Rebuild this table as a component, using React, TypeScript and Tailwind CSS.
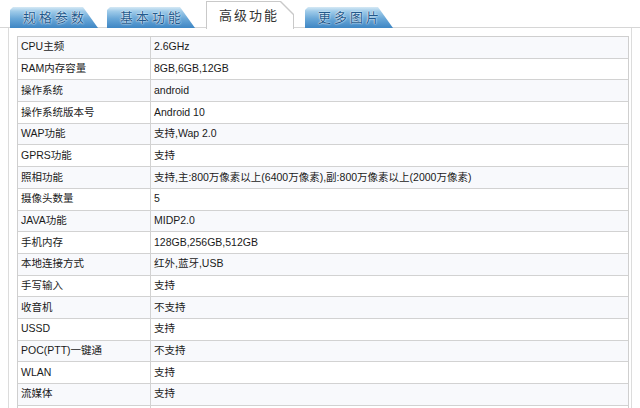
import React from "react";

const rows: [string, string][] = [
  ["CPU主频", "2.6GHz"],
  ["RAM内存容量", "8GB,6GB,12GB"],
  ["操作系统", "android"],
  ["操作系统版本号", "Android 10"],
  ["WAP功能", "支持,Wap 2.0"],
  ["GPRS功能", "支持"],
  ["照相功能", "支持,主:800万像素以上(6400万像素),副:800万像素以上(2000万像素)"],
  ["摄像头数量", "5"],
  ["JAVA功能", "MIDP2.0"],
  ["手机内存", "128GB,256GB,512GB"],
  ["本地连接方式", "红外,蓝牙,USB"],
  ["手写输入", "支持"],
  ["收音机", "不支持"],
  ["USSD", "支持"],
  ["POC(PTT)一键通", "不支持"],
  ["WLAN", "支持"],
  ["流媒体", "支持"],
  ["", ""],
];

function BlueTab({ label, ml }: { label: string; ml: string }) {
  return (
    <div
      className={`${ml} mt-[7px] h-[21px] w-[88px] shrink-0 bg-[linear-gradient(to_bottom,#d6e9f5_0%,#9fcbe9_20%,#6aa8d8_55%,#3e86c4_100%)] [clip-path:polygon(0_3px,3px_0,73px_0,88px_100%,0_100%)] flex items-center pl-[13px]`}
    >
      <span className="text-[13px] tracking-[3px] text-[#22598c] [text-shadow:0_0_2px_#ffffff,0_0_1px_#ffffff] leading-none">
        {label}
      </span>
    </div>
  );
}

export default function App() {
  return (
    <div
      className="w-[640px] h-[408px] overflow-hidden bg-white"
      style={{ fontFamily: '"Liberation Sans", "Noto Sans CJK SC", sans-serif' }}
    >
      {/* tabs */}
      <div className="flex h-[28px] border-b border-[#d6d6d6]">
        <BlueTab label="规格参数" ml="ml-[10px]" />
        <BlueTab label="基本功能" ml="ml-[9px]" />
        <div className="ml-[11px] mt-[1px] h-[28px] w-[88px] shrink-0 bg-[#c9c9c9] [clip-path:polygon(0_0,75px_0,88px_13px,88px_100%,0_100%)] relative">
          <div className="absolute left-[1px] top-[1px] h-[27px] w-[86px] bg-white [clip-path:polygon(0_0,73px_0,86px_13px,86px_100%,0_100%)] flex items-center pl-[12px]">
            <span className="text-[13px] tracking-[2px] text-[#333] leading-none">高级功能</span>
          </div>
        </div>
        <BlueTab label="更多图片" ml="ml-[11px]" />
      </div>
      {/* content */}
      <div className="ml-[8px] mr-[8px] border-l border-r border-[#dcdcdc] pt-[8px] pl-[8px] pr-[2px]">
        <div className="border border-[#cfcfcf] text-[10.5px] text-[#1a1a1a]">
          {rows.map(([k, v], i) => (
            <div
              key={i}
              className={`flex h-[21.7px] items-center border-b border-[#d2d2d2] ${
                i % 2 === 0 ? "bg-[#f8f9fc]" : "bg-white"
              }`}
            >
              <div className="w-[133px] h-full flex items-center pl-[3px] border-r border-[#d2d2d2]">
                {k}
              </div>
              <div className="flex-1 h-full flex items-center pl-[3px]">{v}</div>
            </div>
          ))}
        </div>
      </div>
    </div>
  );
}
